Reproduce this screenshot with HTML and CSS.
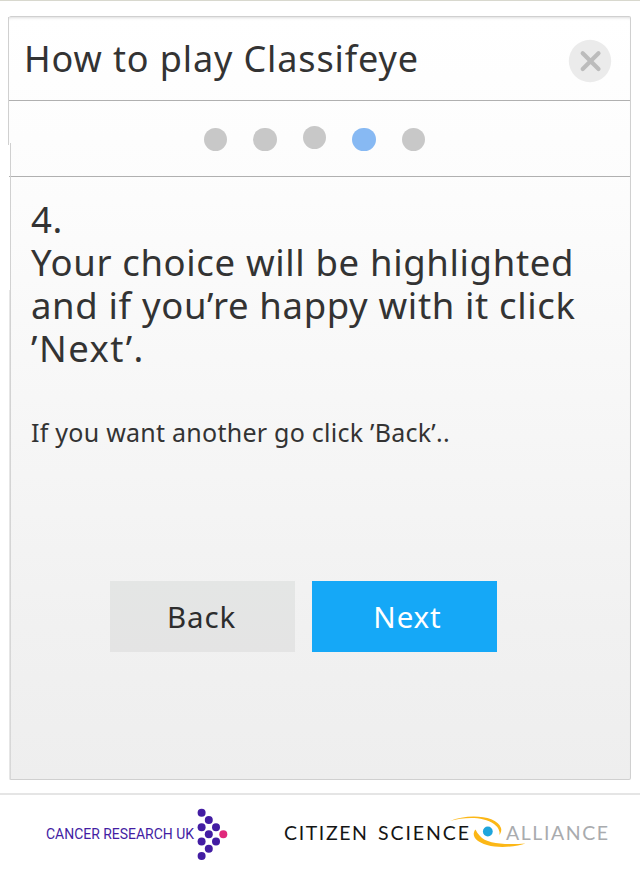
FILE: index.html
```
<!DOCTYPE html>
<html lang="en">
<head>
<meta charset="utf-8">
<title>How to play Classifeye</title>
<link rel="stylesheet" href="styles.css">
</head>
<body>
<main class="panel">
  <header class="panel-header">
    <h1 class="title">How to play Classifeye</h1>
    <button class="close" aria-label="Close">
      <svg width="44" height="44" viewBox="0 0 44 44"><circle cx="22" cy="22" r="21.2" fill="#ebebeb"/><path d="M14.7 14.2l15.8 15.8M30.5 14.2L14.7 30" stroke="#bcbcbc" stroke-width="4.2" stroke-linecap="round"/></svg>
    </button>
  </header>
  <nav class="steps">
    <span class="dot"></span><span class="dot"></span><span class="dot raised"></span><span class="dot active"></span><span class="dot"></span>
  </nav>
  <section class="content">
    <h2 class="lead">4.<br>Your choice will be highlighted<br>and if you’re happy with it click<br><span class="quoted">’Next’.</span></h2>
    <p class="hint">If you want another go click ’Back’..</p>
    <div class="actions">
      <button class="btn back">Back</button>
      <button class="btn next">Next</button>
    </div>
  </section>
</main>
<footer class="footer">
  <svg class="cruk" width="190" height="60" viewBox="0 0 190 60">
    <text x="6" y="33" textLength="148" lengthAdjust="spacingAndGlyphs">CANCER RESEARCH UK</text>
    <g fill="#431da3"><circle cx="161.6" cy="6.8" r="4"/><circle cx="168.8" cy="14" r="4"/><circle cx="161.6" cy="21.2" r="4"/><circle cx="176" cy="21.2" r="4"/><circle cx="168.8" cy="28.3" r="4"/><circle cx="161.6" cy="35.5" r="4"/><circle cx="176" cy="35.5" r="4"/><circle cx="168.8" cy="42.7" r="4"/><circle cx="161.6" cy="49.9" r="4"/></g>
    <circle cx="183.3" cy="28.3" r="4" fill="#e0297b"/>
  </svg>
  <svg class="csa" width="340" height="50" viewBox="0 0 340 50">
    <text x="4" y="29" textLength="83" class="dark">CITIZEN</text>
    <text x="98" y="29" textLength="91" class="dark">SCIENCE</text>
    <text x="226" y="29" textLength="102" class="light">ALLIANCE</text>
    <path d="M170 10C187 2.500 217 4 221 17Q222 20 219.500 24Q220.500 18 214 13C203 5 184 6 170 10Z" fill="#fcb716"/>
    <path d="M195.500 18.500C191 24 195 31 207 34C221 38 238 35 245.500 32.500C227 34 206 33 200 25Q197 22 195.500 18.500Z" fill="#fcb716"/>
    <circle cx="207.800" cy="20.500" r="4.900" fill="#1fa5dc"/>
  </svg>
</footer>
</body>
</html>
```
FILE: styles.css
```
* { box-sizing: border-box; }
body {
  margin: 0;
  height: 872px;
  overflow: hidden;
  background: #fff;
  border-top: 1px solid #d8d8ce;
  color: #333;
  font-family: "Noto Sans", "Open Sans", sans-serif;
  display: flex;
  flex-direction: column;
}
button { border: 0; padding: 0; font: inherit; }
.panel {
  position: relative;
  width: 622px;
  height: 764px;
  margin: 15px 0 0 9px;
  border: 1px solid #d0d0d0;
  border-left: 0;
  border-radius: 2px;
  background: linear-gradient(#fff 0, #fcfcfc 24%, #f6f6f6 55%, #f1f1f1 80%, #eee 100%);
  box-shadow: inset 0 3px 3px -2px #ddd;
}
/* Stepped left edge of the card */
.panel::before {
  content: "";
  position: absolute;
  left: -1px;
  top: 0;
  width: 1px;
  height: 128px;
  background: #d0d0d0;
}
.panel::after {
  content: "";
  position: absolute;
  left: 0;
  top: 126px;
  bottom: 0;
  width: 2px;
  background: linear-gradient(#fff 0 33px, #b0b0b0 33px 34px, #fff 34px 147px, #e6e6e6 147px) 0 0 / 1px 100% no-repeat,
    linear-gradient(#d0d0d0, #d8d8d8) 1px 0 / 1px 100% no-repeat;
}
.panel-header {
  height: 84px;
  display: flex;
  justify-content: space-between;
  padding: 0 18px 0 15px;
  border-bottom: 1px solid #b0b0b0;
}
.title {
  margin: 17px 0 0;
  font-size: 36px;
  line-height: 49px;
  font-weight: 400;
  letter-spacing: .88px;
  white-space: nowrap;
}
.close { width: 44px; height: 44px; margin-top: 22px; background: none; }
.close svg { display: block; }
.steps {
  height: 76px;
  border-bottom: 1px solid #b0b0b0;
  display: flex;
  justify-content: center;
  align-items: center;
  gap: 26px;
  padding: 2px 10px 0 0;
}
.dot { width: 23.500px; height: 23.500px; border-radius: 50%; background: #c8c8c8; }
.raised { margin-bottom: 4px; }
.active { background: #87b9f3; }
.content { padding: 21px 0 0 22px; }
.lead {
  margin: 0;
  font-size: 36.500px;
  line-height: 43px;
  font-weight: 400;
  letter-spacing: .64px;
  white-space: nowrap;
}
.quoted { letter-spacing: 1.500px; }
.hint { margin: 45px 0 0; font-size: 25px; line-height: 34px; letter-spacing: .25px; white-space: nowrap; }
.actions { display: flex; gap: 17px; margin: 132px 0 0 79px; }
.btn { width: 185px; height: 71px; font-size: 29.500px; line-height: 71px; letter-spacing: .9px; }
.back { background: linear-gradient(#e4e6e5, #e4e4e4); color: #2d2d2d; padding-right: 2px; }
.next { background: #15a8f7; color: #fff; padding-left: 6px; }
.footer {
  height: 79px;
  margin-top: 13px;
  border-top: 2px solid #e5e5e5;
  display: flex;
  align-items: flex-start;
  padding: 11px 0 0 40px;
}
.cruk text { font: 14.500px Roboto, sans-serif; fill: #431da3; }
.csa { margin: 5px 0 0 50px; }
.csa text { font: 19.500px Lato, sans-serif; }
.dark { fill: #151515; }
.light { fill: #a9abae; }
```
